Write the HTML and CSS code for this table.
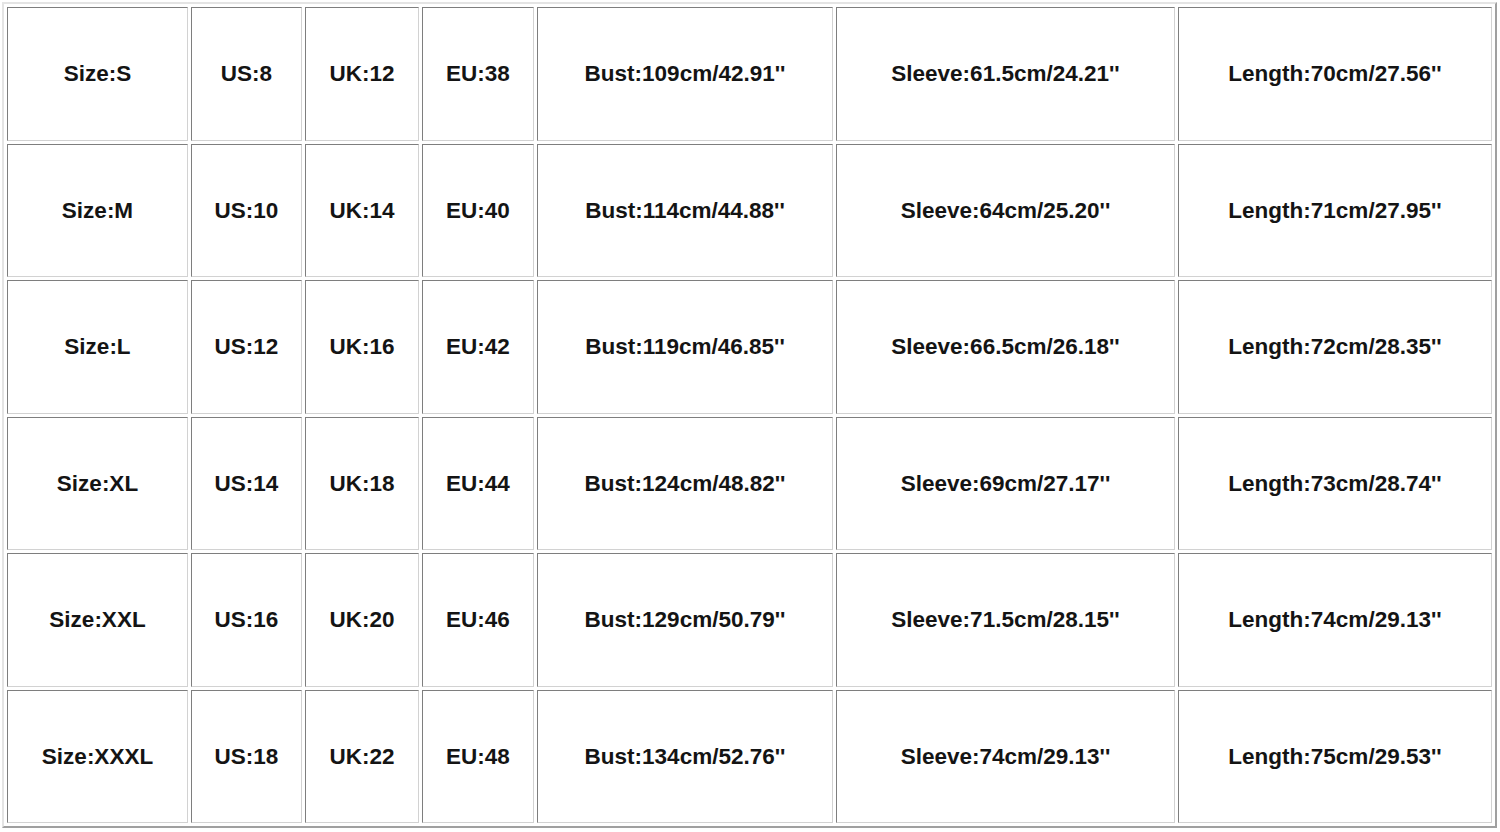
FILE: index.html
```html
<!DOCTYPE html>
<html>
<head>
<meta charset="utf-8">
<title>Size Chart</title>
<link rel="stylesheet" href="styles.css">
</head>
<body>
<table class="size-table">
  <colgroup>
    <col class="c1"><col class="c2"><col class="c3"><col class="c4"><col class="c5"><col class="c6"><col class="c7">
  </colgroup>
  <tbody>
    <tr class="r-a">
      <td>Size:S</td><td>US:8</td><td>UK:12</td><td>EU:38</td><td>Bust:109cm/42.91''</td><td>Sleeve:61.5cm/24.21''</td><td>Length:70cm/27.56''</td>
    </tr>
    <tr class="r-b">
      <td>Size:M</td><td>US:10</td><td>UK:14</td><td>EU:40</td><td>Bust:114cm/44.88''</td><td>Sleeve:64cm/25.20''</td><td>Length:71cm/27.95''</td>
    </tr>
    <tr class="r-a">
      <td>Size:L</td><td>US:12</td><td>UK:16</td><td>EU:42</td><td>Bust:119cm/46.85''</td><td>Sleeve:66.5cm/26.18''</td><td>Length:72cm/28.35''</td>
    </tr>
    <tr class="r-b">
      <td>Size:XL</td><td>US:14</td><td>UK:18</td><td>EU:44</td><td>Bust:124cm/48.82''</td><td>Sleeve:69cm/27.17''</td><td>Length:73cm/28.74''</td>
    </tr>
    <tr class="r-a">
      <td>Size:XXL</td><td>US:16</td><td>UK:20</td><td>EU:46</td><td>Bust:129cm/50.79''</td><td>Sleeve:71.5cm/28.15''</td><td>Length:74cm/29.13''</td>
    </tr>
    <tr class="r-b">
      <td>Size:XXXL</td><td>US:18</td><td>UK:22</td><td>EU:48</td><td>Bust:134cm/52.76''</td><td>Sleeve:74cm/29.13''</td><td>Length:75cm/29.53''</td>
    </tr>
  </tbody>
</table>
</body>
</html>
```
FILE: styles.css
```css
html, body {
  margin: 0;
  padding: 0;
  background: #ffffff;
}

body {
  padding: 2px 0 0 2px;
  font-family: "Liberation Sans", Arial, sans-serif;
}

.size-table {
  table-layout: fixed;
  width: 1495px;
  border-collapse: separate;
  border-spacing: 3px;
  border-style: solid;
  border-width: 2px;
  border-color: #e4e4e4 #a0a0a0 #a0a0a0 #e4e4e4;
}

.c1 { width: 181px; }
.c2 { width: 111px; }
.c3 { width: 114px; }
.c4 { width: 112px; }
.c5 { width: 296px; }
.c6 { width: 339px; }
.c7 { width: 314px; }

.size-table td {
  box-sizing: border-box;
  padding: 0;
  text-align: center;
  vertical-align: middle;
  font-size: 22.5px;
  font-weight: bold;
  color: #141414;
  white-space: nowrap;
  border-style: solid;
  border-width: 1px;
  border-color: #7e7e7e #d2d2d2 #d2d2d2 #7e7e7e;
}

.r-a td { height: 134px; }
.r-b td { height: 133px; }
```
